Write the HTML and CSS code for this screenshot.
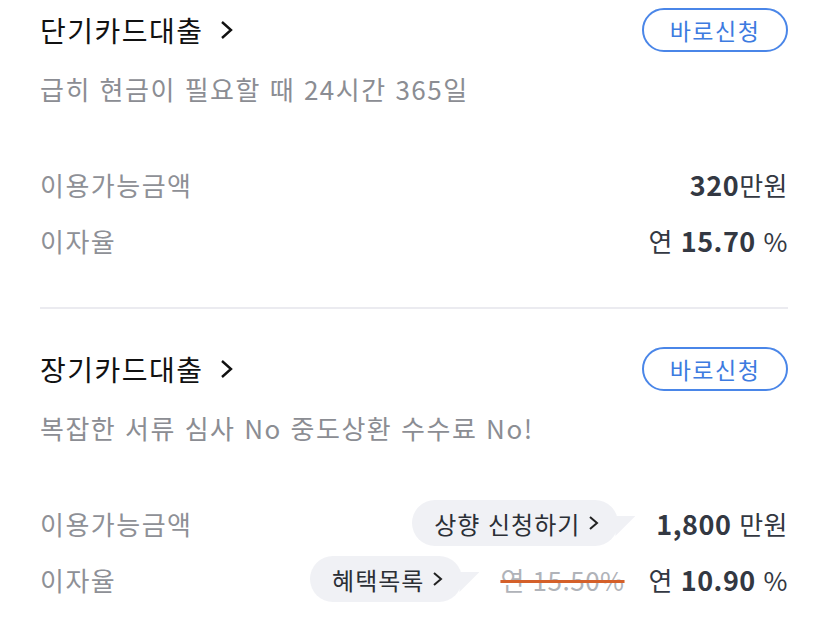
FILE: index.html
```html
<!DOCTYPE html>
<html lang="ko">
<head>
    <meta charset="UTF-8">
    <meta name="viewport" content="width=device-width, initial-scale=1.0">
    <title>카드대출</title>
    <link rel="stylesheet" href="styles.css">
</head>
<body>

    <div class="container">
        <div class="loan">
            <div class="loan-head">
                <a class="loan-title" href="#">단기카드대출
                    <svg class="chev" width="16" height="22" viewBox="0 0 16 22"><path d="M3 3 L12 11 L3 19" fill="none" stroke="#111" stroke-width="2.4"/></svg>
                </a>
                <button class="apply-btn">바로신청</button>
            </div>
            <p class="loan-desc">급히 현금이 필요할 때 24시간 365일</p>
            <div class="rows">
                <div class="row">
                    <span class="label">이용가능금액</span>
                    <span class="value"><b>320</b>만원</span>
                </div>
                <div class="row">
                    <span class="label">이자율</span>
                    <span class="value">연 <b>15.70</b> %</span>
                </div>
            </div>
        </div>

        <div class="loan">
            <div class="loan-head">
                <a class="loan-title" href="#">장기카드대출
                    <svg class="chev" width="16" height="22" viewBox="0 0 16 22"><path d="M3 3 L12 11 L3 19" fill="none" stroke="#111" stroke-width="2.4"/></svg>
                </a>
                <button class="apply-btn">바로신청</button>
            </div>
            <p class="loan-desc">복잡한 서류 심사 No 중도상환 수수료 No!</p>
            <div class="rows">
                <div class="row">
                    <span class="label">이용가능금액</span>
                    <div class="right">
                        <a class="bubble" href="#">상향 신청하기
                            <svg width="12" height="18" viewBox="0 0 12 18"><path d="M2 3 L9 9 L2 15" fill="none" stroke="#222" stroke-width="2"/></svg>
                        </a>
                        <span class="value"><b>1,800</b> 만원</span>
                    </div>
                </div>
                <div class="row">
                    <span class="label">이자율</span>
                    <div class="right">
                        <a class="bubble" href="#">혜택목록
                            <svg width="12" height="18" viewBox="0 0 12 18"><path d="M2 3 L9 9 L2 15" fill="none" stroke="#222" stroke-width="2"/></svg>
                        </a>
                        <span class="old-rate">연 15.50%</span>
                        <span class="value">연 <b>10.90</b> %</span>
                    </div>
                </div>
            </div>
        </div>
    </div>

</body>
</html>
```

FILE: styles.css
```css
body {
    font-family: "Noto Sans CJK KR", "Noto Sans", sans-serif;
    background-color: #fff;
    margin: 0;
    padding: 0;
    color: #111;
}

.container {
    padding: 0 40px;
}

.loan {
    padding: 7px 0 44px;
}

.loan + .loan {
    border-top: 2px solid #ebebf0;
    padding-top: 37px;
}

.loan-head {
    display: flex;
    justify-content: space-between;
    align-items: center;
    height: 46px;
}

.loan-title {
    display: flex;
    align-items: center;
    gap: 15px;
    font-size: 28px;
    color: #111;
    text-decoration: none;
    letter-spacing: 1.5px;
}

.apply-btn {
    width: 146px;
    height: 44px;
    border: 2px solid #4a86e8;
    border-radius: 22px;
    background: #fff;
    color: #3d7be0;
    font-family: inherit;
    font-size: 23px;
    letter-spacing: 1.5px;
    padding: 0;
    cursor: pointer;
}

.loan-desc {
    margin: 18px 0 0;
    font-size: 26px;
    line-height: 36px;
    color: #8b8d93;
    letter-spacing: 1.5px;
}

.rows {
    margin-top: 54px;
    display: flex;
    flex-direction: column;
    gap: 10px;
}

.row {
    display: flex;
    justify-content: space-between;
    align-items: center;
    height: 46px;
}

.label {
    font-size: 26px;
    color: #8e9096;
    letter-spacing: 1.5px;
}

.right {
    display: flex;
    align-items: center;
}

.value {
    font-size: 26px;
    color: #333842;
    letter-spacing: 0.5px;
}

.value b {
    font-size: 27px;
    font-weight: 700;
}

.bubble {
    position: relative;
    display: flex;
    align-items: center;
    gap: 8px;
    height: 46px;
    padding: 0 18px 0 22px;
    border-radius: 23px;
    background-color: #f0f1f5;
    color: #2b2f36;
    font-size: 24px;
    letter-spacing: 1px;
    text-decoration: none;
    margin-right: 38px;
}

.bubble::after {
    content: "";
    position: absolute;
    right: -17px;
    top: 16px;
    width: 20px;
    height: 20px;
    background-color: #f0f1f5;
    clip-path: polygon(0 0, 100% 0, 0 100%);
}

.old-rate {
    font-size: 26px;
    color: #b0b3b9;
    margin-right: 24px;
    letter-spacing: 0.5px;
    text-decoration: line-through;
    text-decoration-color: #d4602a;
    text-decoration-thickness: 3px;
}
```
